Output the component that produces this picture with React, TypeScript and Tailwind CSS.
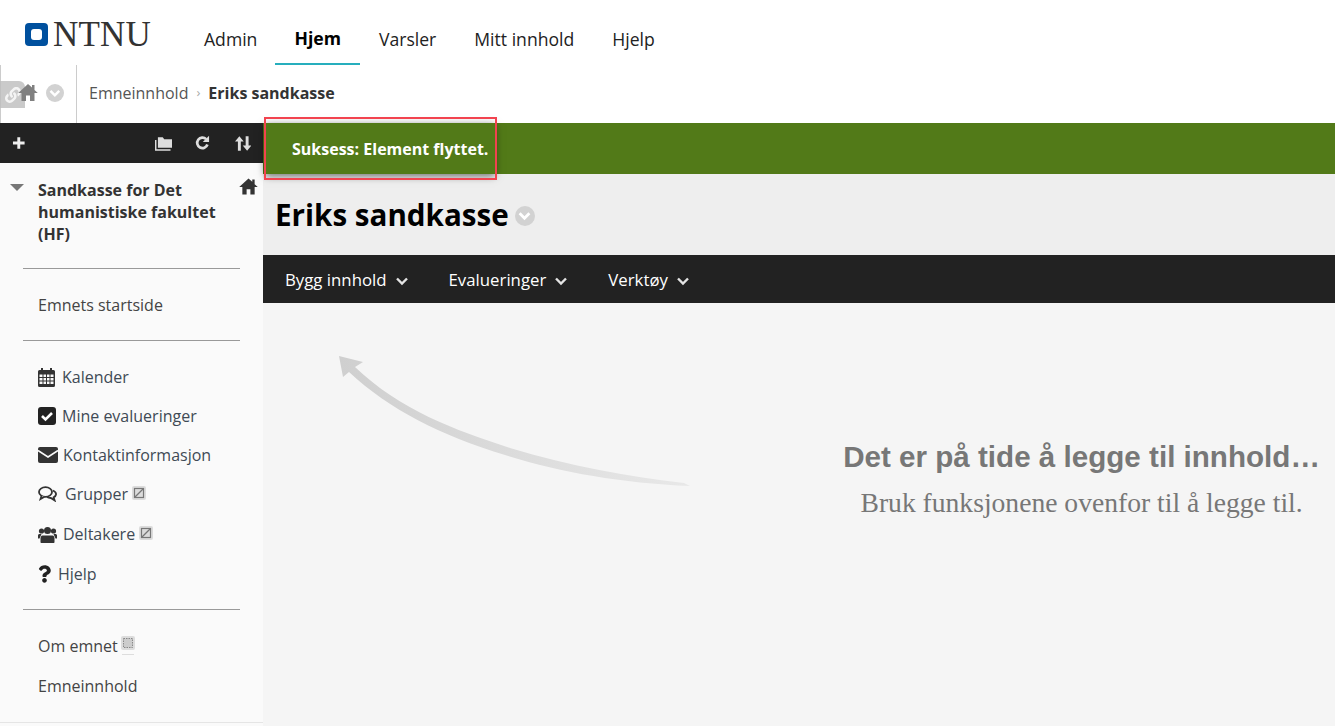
import React from 'react';
import { FaLink, FaQuestion } from 'react-icons/fa';

const NAV = ['Admin', 'Hjem', 'Varsler', 'Mitt innhold', 'Hjelp'];

const Chip: React.FC<{ className?: string }> = ({ className }) => (
  <span className={`inline-flex items-center justify-center rounded-full bg-[#d2d2d2] text-white ${className ?? ''}`}>
    <svg width="65%" height="65%" viewBox="0 0 12 12" fill="none" stroke="currentColor" strokeWidth="2.6">
      <path d="M1.5 4l4.5 4.5L10.5 4" />
    </svg>
  </span>
);

const Home: React.FC<{ className?: string }> = ({ className }) => (
  <svg viewBox="0 0 20 18" fill="currentColor" className={className}>
    <path d="M10 .5L.2 9.500H3.500V17.500H8V12h4v5.500h4.500V9.500h3.300L16.500 6.500V1.500h-2.500v2.500z" />
  </svg>
);

const Hidden: React.FC = () => (
  <svg width="14" height="14" viewBox="0 0 14 14" className="ml-[4px] -mt-[3px]">
    <rect width="14" height="14" rx="2" fill="#dcdcdc" />
    <rect x="2.5" y="2.5" width="9" height="9" fill="none" stroke="#777" strokeWidth="1.2" />
    <path d="M3 11L11 3" stroke="#777" strokeWidth="1.2" />
  </svg>
);

const ToolLink: React.FC<{ label: string }> = ({ label }) => (
  <div className="flex items-center gap-[9px] text-[16.8px] text-white">
    <span>{label}</span>
    <svg width="12" height="12" viewBox="0 0 12 12" fill="none" stroke="#e4e4e4" strokeWidth="2.4" className="mt-[3px]">
      <path d="M1 3.500l5 5 5-5" />
    </svg>
  </div>
);

const App: React.FC = () => {
  return (
    <div className="relative w-[1335px] h-[726px] overflow-hidden bg-white font-['Open_Sans',sans-serif] text-[#333]">
      <header className="flex h-[65px] items-start bg-white">
        <div className="flex w-[204px] items-center pl-[25px] pt-[19px]">
          <span className="flex h-[23px] w-[23px] items-center justify-center rounded-[4px] bg-[#00509e]">
            <span className="h-[11px] w-[11px] rounded-[3px] bg-white" />
          </span>
          <span className="ml-[5px] pt-[1px] font-['Liberation_Serif',serif] text-[35px] leading-[30px] tracking-[0.2px] text-[#333]">NTNU</span>
        </div>
        <nav className="flex">
          {NAV.map((item) => (
            <div
              key={item}
              className={
                item === 'Hjem'
                  ? 'mx-[-19px] flex h-[65px] items-center border-b-2 border-[#26aebd] px-[19px] pt-[14px] text-[17.6px] font-bold text-black'
                  : 'flex h-[65px] items-center pt-[14px] text-[17.6px] text-[#222]'
              }
            >
              <span className={item === 'Admin' ? 'mr-[37px]' : item === 'Hjem' ? '' : 'ml-[38px]'}>{item}</span>
            </div>
          ))}
        </nav>
      </header>

      <div className="flex h-[58px] items-center border-l border-[#ccc] bg-white">
        <div className="flex h-full w-[76px] items-center border-r border-[#ccc] pb-[3px] pl-[17px]">
          <span className="h-[20px] w-[20px]" />
          <Chip className="ml-[8px] h-[18px] w-[18px]" />
        </div>
        <div className="ml-[12px] flex items-center pb-[2px] text-[16px]">
          <span className="text-[#555]">Emneinnhold</span>
          <span className="mx-[8px] text-[13px] text-[#aaa]">›</span>
          <span className="font-bold text-[#333]">Eriks sandkasse</span>
        </div>
      </div>

      <div className="flex h-[603px]">
        <aside className="w-[263px] shrink-0 bg-[#fafafa]">
          <div className="flex h-[40px] items-center bg-[#222] px-[12px] text-white">
            <svg width="14" height="14" viewBox="0 0 14 14" fill="#eee">
              <path d="M5.500 1h3v4.500H13v3H8.500V13h-3V8.500H1v-3h4.500z" />
            </svg>
            <svg width="18" height="17" viewBox="0 0 18 17" className="ml-[129px]" fill="#ddd">
              <path d="M3 2h5l1.500 2H18v9H3z" />
              <path d="M0 5h1.500v9.500H16V16H0z" />
            </svg>
            <svg width="16" height="16" viewBox="0 0 16 16" className="ml-[23px]" fill="none" stroke="#ddd" strokeWidth="2.800">
              <path d="M12.800 9.500A5.400 5.400 0 1 1 11.500 4" />
              <path d="M14.500 0.500v6.500h-6.500z" fill="#ddd" stroke="none" />
            </svg>
            <svg width="17" height="17" viewBox="0 0 17 17" className="ml-[24px]" fill="#ddd">
              <path d="M4.500 1L9 6.500H6V16H3V6.500H0z" />
              <path d="M12.500 16L8 10.500h3V1h3v9.500h3z" />
            </svg>
          </div>
          <div className="relative pl-[38px] pr-[40px] pt-[16px] text-[16px] font-bold leading-[22px] text-[#333]">
            <span className="absolute left-[10px] top-[21px] h-0 w-0 border-x-[7px] border-t-[7px] border-x-transparent border-t-[#777]" />
            <Home className="absolute right-[5px] top-[15px] h-[17px] w-[19px] text-[#333]" />
            Sandkasse for Det humanistiske fakultet (HF)
          </div>
          <div className="mx-[23px] mt-[23px] border-t border-[#999]" />
          <div className="pl-[38px] pt-[25px] text-[16px] leading-[22px] text-[#444]">Emnets startside</div>
          <div className="mx-[23px] mt-[24px] border-t border-[#999]" />
          <ul className="mt-[25px] pl-[38px] text-[16px] leading-[22px] text-[#3f4a55]">
            <li className="flex h-[22px] items-center">
              <svg width="17" height="19" viewBox="0 0 17 19" fill="#333">
                <path fillRule="evenodd" d="M3 0h2v2h7V0h2v2h1.500A1.500 1.500 0 0 1 17 3.500v14a1.500 1.500 0 0 1-1.500 1.500h-14A1.500 1.500 0 0 1 0 17.500v-14A1.500 1.500 0 0 1 1.500 2H3zM1.500 6.500v2.500h3V6.500zm4 0v2.500h2.500V6.500zm3.500 0v2.500h2.500V6.500zm3.500 0v2.500h3V6.500zm-11 3.500v2.500h3V10zm4 0v2.500h2.500V10zm3.500 0v2.500h2.500V10zm3.500 0v2.500h3V10zm-11 3.500V16h3v-2.500zm4 0V16h2.500v-2.500zm3.500 0V16h2.500v-2.500zm3.500 0V16h3v-2.500z" />
              </svg>
              <span className="ml-[7px]">Kalender</span>
            </li>
            <li className="mt-[17px] flex h-[22px] items-center">
              <svg width="18" height="18" viewBox="0 0 18 18">
                <rect width="18" height="18" rx="3" fill="#222" />
                <path d="M4 9l3.500 3.500L14 6" fill="none" stroke="#fff" strokeWidth="2.600" />
              </svg>
              <span className="ml-[6px]">Mine evalueringer</span>
            </li>
            <li className="mt-[17px] flex h-[22px] items-center">
              <svg width="20" height="16" viewBox="0 0 20 16">
                <rect width="20" height="16" rx="2" fill="#333" />
                <path d="M0 3.500l10 6.500 10-6.500" fill="none" stroke="#fafafa" strokeWidth="1.500" />
              </svg>
              <span className="ml-[5px]">Kontaktinformasjon</span>
            </li>
            <li className="mt-[17px] flex h-[22px] items-center">
              <svg width="19" height="16" viewBox="0 0 19 16" fill="none" stroke="#333" strokeWidth="1.800">
                <ellipse cx="7.500" cy="6" rx="6.500" ry="4.800" />
                <path d="M3.500 10l-1 3 4-2.200" fill="#fafafa" />
                <path d="M15 4.500c2.200 1 3.200 2.500 3 4-.2 1.200-1 2.200-2.400 2.900l1 3-3.800-2.400c-1.500 0-2.900-.4-3.800-1" />
              </svg>
              <span className="ml-[8px]">Grupper</span>
              <Hidden />
            </li>
            <li className="mt-[18px] flex h-[22px] items-center">
              <svg width="19" height="17" viewBox="0 0 19 17" fill="#333">
                <circle cx="9.500" cy="4.500" r="3.500" />
                <circle cx="3.500" cy="5" r="2.600" />
                <circle cx="15.500" cy="5" r="2.600" />
                <path d="M4.500 9.500h10c1.500 0 2 1.500 2 3V16c0 .6-.4 1-1 1h-12c-.6 0-1-.4-1-1v-3.500c0-1.500.5-3 2-3z" />
                <path d="M0 9.500c0-1 .8-1.500 1.500-1.500h2L1.500 12.500H0zM19 9.500c0-1-.8-1.500-1.500-1.500h-2l2 4.500H19z" />
              </svg>
              <span className="ml-[6px]">Deltakere</span>
              <Hidden />
            </li>
            <li className="mt-[18px] flex h-[22px] items-center">
              <FaQuestion className="h-[18px] w-[13px] text-[#222]" />
              <span className="ml-[7px]">Hjelp</span>
            </li>
          </ul>
          <div className="mx-[23px] mt-[24px] border-t border-[#999]" />
          <div className="flex items-center pl-[38px] pt-[25px] text-[16px] leading-[22px] text-[#444]">
            Om emnet
            <svg width="14" height="20" viewBox="0 0 14 20" className="ml-[3px]">
              <rect width="14" height="14" rx="2" fill="#dcdcdc" />
              <rect x="2.500" y="2.500" width="9" height="9" fill="#ccc" stroke="#888" strokeDasharray="1.500 1" />
              <rect x="1" y="18" width="12" height="1" fill="#ddd" />
            </svg>
          </div>
          <div className="pl-[38px] pt-[18px] text-[16px] leading-[22px] text-[#444]">Emneinnhold</div>
          <div className="mt-[25px] border-t border-[#e5e5e5]" />
        </aside>

        <main className="flex min-w-0 flex-1 flex-col bg-[#f5f5f5]">
          <div className="h-[51px] shrink-0 bg-[#527a18]" />
          <div className="flex h-[81px] shrink-0 items-center bg-[#eeeeee] pt-[2px] pl-[12px]">
            <h1 className="text-[29.6px] font-bold text-black">Eriks sandkasse</h1>
            <Chip className="ml-[6px] h-[20px] w-[20px]" />
          </div>
          <div className="flex h-[48px] shrink-0 items-center gap-[41px] bg-[#222] pl-[22px] pt-[1px]">
            <ToolLink label="Bygg innhold" />
            <ToolLink label="Evalueringer" />
            <ToolLink label="Verktøy" />
          </div>
          <div className="flex flex-1 justify-end pr-[15px] pt-[136px]">
            <div className="text-center">
              <div className="font-['Liberation_Sans',sans-serif] text-[29.6px] font-bold leading-[36px] text-[#777]">Det er på tide å legge til innhold…</div>
              <div className="mt-[12px] font-['Liberation_Serif',serif] text-[27.6px] leading-[32px] text-[#777]">Bruk funksjonene ovenfor til å legge til.</div>
            </div>
          </div>
        </main>
      </div>

      {/* pale arrow drawn on the empty state */}
      <svg className="absolute left-[330px] top-[350px]" width="370" height="145" viewBox="330 350 370 145">
        <defs>
          <linearGradient id="fade" x1="340" y1="0" x2="690" y2="0" gradientUnits="userSpaceOnUse">
            <stop offset="0" stopColor="#cfcfcf" />
            <stop offset="1" stopColor="#e8e8e8" />
          </linearGradient>
        </defs>
        <path d="M339 356L363 362L355 367C400 410 455 430 510 448C570 466 630 477 684 483L690 486C620 483 560 472 505 455C440 435 390 410 349 372L343 377Z" fill="url(#fade)" />
      </svg>

      {/* link overlay on the breadcrumb */}
      <div className="absolute left-0 top-[81px] flex h-[27px] w-[25px] items-center justify-center rounded-tr-[6px] bg-[#bdbdbd]/80">
        <FaLink className="h-[16px] w-[16px] text-white/80" />
      </div>
      <Home className="absolute left-[18px] top-[83px] h-[19px] w-[20px] text-[#808080]" />

      {/* success message sits over the bar with its own shadow */}
      <div className="absolute left-[265px] top-[123px] flex h-[51px] w-[230px] items-center bg-[#527a18] pl-[27px] text-[16px] font-bold text-white shadow-[0_2px_8px_rgba(0,0,0,0.55)]">
        Suksess: Element flyttet.
      </div>

      {/* annotation frame round the message */}
      <div className="absolute left-[264px] top-[117px] h-[63px] w-[233px] border-2 border-[#f2434f]" />
    </div>
  );
};

export default App;
